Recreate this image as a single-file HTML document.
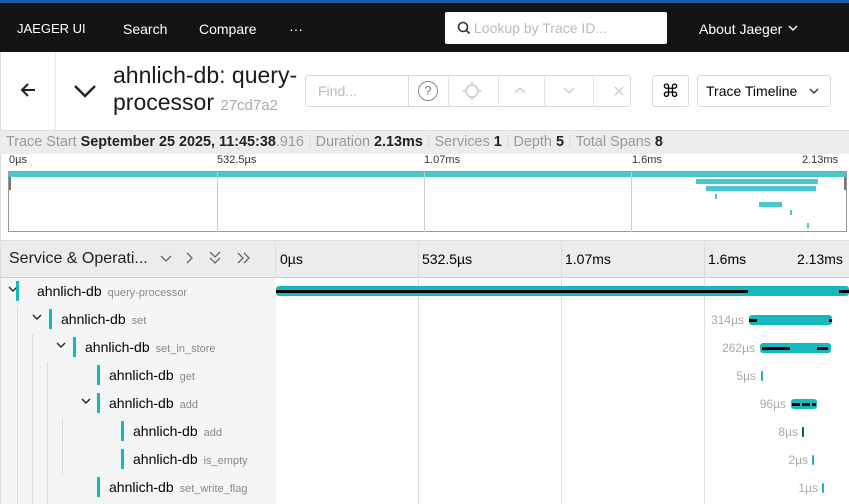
<!DOCTYPE html>
<html><head><meta charset="utf-8"><style>
*{box-sizing:border-box;margin:0;padding:0}
body{width:849px;height:504px;overflow:hidden;font-family:"Liberation Sans",sans-serif;background:#fff;position:relative;color:#000}
.a{position:absolute}
.nav{left:0;top:0;width:849px;height:52px;background:#141414;border-top:3px solid #1d5aa6}
.nav span{position:absolute;top:18px;color:#fff;font-size:14px}
.btn{position:absolute;border:1px solid #d9d9d9;border-radius:3px;background:#fff}
.row{position:absolute;left:0;width:849px;height:28px}
.sv{position:absolute;top:6px;font-size:14px;white-space:nowrap}
.sv small{font-size:11px;color:#888;margin-left:6px}
.bar{position:absolute;width:3px;height:20px;top:4px;background:#17b8be}
.vl{position:absolute;top:277px;width:1px;height:227px;background:#e0e0e0}
.sp{position:absolute;height:10px;background:#17b8be;border-radius:3px}
.lbl{position:absolute;font-size:12px;color:#aaa;text-align:right;top:8px}
.ln{position:absolute;height:3px;background:#000;top:3.5px}
.ch{position:absolute;top:9px}
.p{color:#ddd;margin:0 4px}
</style></head><body>
<div class="a nav">
<span style="left:17px;font-size:13px">JAEGER UI</span>
<span style="left:123px">Search</span>
<span style="left:199px">Compare</span>
<span style="left:289px;top:18px">···</span>
<div class="a" style="left:445px;top:9px;width:222px;height:32px;background:#fff;border-radius:2px">
<svg class="a" style="left:12px;top:9px" width="14" height="14" viewBox="0 0 14 14"><circle cx="6" cy="6" r="4.5" fill="none" stroke="#333" stroke-width="1.6"/><path d="M9 9l3.5 3.5" stroke="#333" stroke-width="1.8"/></svg>
<span style="left:29px;top:8px;color:#bbb;font-size:14px">Lookup by Trace ID...</span></div>
<span style="left:699px">About Jaeger</span>
<svg class="a" style="left:788px;top:22px" width="10" height="7"><path d="M1 1l4 4 4-4" stroke="#fff" fill="none" stroke-width="1.4"/></svg>
</div>
<div class="a" style="left:0;top:52px;width:56px;height:78px;border-right:1px solid #e8e8e8;border-left:1px solid #ddd"></div>
<svg class="a" style="left:19px;top:81px" width="18" height="18"><path d="M16 9H3M9 3L3 9l6 6" stroke="#222" stroke-width="2" fill="none"/></svg>
<svg class="a" style="left:73px;top:84px" width="24" height="14"><path d="M2 2l10 10 10-10" stroke="#222" stroke-width="2.4" fill="none"/></svg>
<div class="a" style="left:113px;top:62px;font-size:23px;line-height:27px;color:#1a1a1a;white-space:nowrap">ahnlich-db: query-<br>processor <span style="font-size:15px;color:#aaa">27cd7a2</span></div>
<div class="btn" style="left:305px;top:75px;width:326px;height:32px"></div>
<span class="a" style="left:318px;top:83px;color:#bbb;font-size:14px">Find...</span>
<div class="a" style="left:408px;top:75px;width:1px;height:32px;background:#d9d9d9"></div>
<div class="a" style="left:418px;top:81px;width:20px;height:20px;border:1.3px solid #888;border-radius:50%;font-size:13px;color:#777;text-align:center;line-height:18px">?</div>
<div class="a" style="left:448px;top:75px;width:1px;height:32px;background:#e5e5e5"></div>
<div class="a" style="left:498px;top:75px;width:1px;height:32px;background:#e5e5e5"></div>
<div class="a" style="left:544px;top:75px;width:1px;height:32px;background:#e5e5e5"></div>
<div class="a" style="left:593px;top:75px;width:1px;height:32px;background:#e5e5e5"></div>
<svg class="a" style="left:462px;top:81px" width="20" height="20"><circle cx="10" cy="10" r="6" fill="none" stroke="#ccc" stroke-width="1.5"/><path d="M10 1v4M10 15v4M1 10h4M15 10h4" stroke="#ccc" stroke-width="1.5"/></svg>
<svg class="a" style="left:514px;top:86px" width="12" height="8"><path d="M1 7l5-5 5 5" stroke="#ccc" fill="none" stroke-width="1.4"/></svg>
<svg class="a" style="left:563px;top:87px" width="12" height="8"><path d="M1 1l5 5 5-5" stroke="#ccc" fill="none" stroke-width="1.4"/></svg>
<svg class="a" style="left:614px;top:86px" width="10" height="10"><path d="M1 1l8 8M9 1l-8 8" stroke="#ccc" stroke-width="1.3"/></svg>
<div class="btn" style="left:652px;top:75px;width:37px;height:32px;text-align:center;font-size:18px;line-height:30px">⌘</div>
<div class="btn" style="left:697px;top:75px;width:134px;height:32px"></div>
<span class="a" style="left:706px;top:83px;font-size:14px">Trace Timeline</span>
<svg class="a" style="left:809px;top:88px" width="10" height="7"><path d="M1 1l4 4 4-4" stroke="#333" fill="none" stroke-width="1.4"/></svg>
<div class="a" style="left:0;top:130px;width:849px;height:24px;background:#ececec;border-top:1px solid #e0e0e0;font-size:14.4px;color:#999;padding:3px 0 0 6px;white-space:nowrap">Trace Start <b style="color:#222">September 25 2025, 11:45:38</b>.916<span class="p">|</span>Duration <b style="color:#222">2.13ms</b><span class="p">|</span>Services <b style="color:#222">1</b><span class="p">|</span>Depth <b style="color:#222">5</b><span class="p">|</span>Total Spans <b style="color:#222">8</b></div>
<div class="a" style="left:0;top:154px;width:849px;height:86px;border-left:1px solid #ddd;font-size:11px;color:#333">
<span class="a" style="left:8px;top:0">0µs</span><span class="a" style="left:216px;top:0">532.5µs</span><span class="a" style="left:423px;top:0">1.07ms</span><span class="a" style="left:631px;top:0">1.6ms</span><span class="a" style="left:801px;top:0">2.13ms</span>
</div>
<div class="a" style="left:8px;top:171px;width:839px;height:61px;border:1px solid #999;background:#fff">
<div class="a" style="left:0;top:0;width:837px;height:5px;background:#4bc6cb"></div>
<div class="a" style="left:208px;top:0;width:1px;height:60px;background:#ccc"></div>
<div class="a" style="left:415px;top:0;width:1px;height:60px;background:#ccc"></div>
<div class="a" style="left:622px;top:0;width:1px;height:60px;background:#ccc"></div>
<div class="a" style="left:0;top:5px;width:2px;height:13px;background:#777"></div>
<div class="a" style="left:835px;top:5px;width:2px;height:13px;background:#777"></div>
<div class="a" style="left:687px;top:7px;width:122px;height:5px;background:#4bc6cb"></div>
<div class="a" style="left:697px;top:14px;width:110px;height:5px;background:#4bc6cb"></div>
<div class="a" style="left:706px;top:22px;width:2px;height:5px;background:#4bc6cb"></div>
<div class="a" style="left:750px;top:30px;width:23px;height:5px;background:#4bc6cb"></div>
<div class="a" style="left:781px;top:38px;width:2px;height:5px;background:#4bc6cb"></div>
<div class="a" style="left:798px;top:51px;width:2px;height:5px;background:#4bc6cb"></div>
</div>
<div class="a" style="left:0;top:240px;width:849px;height:38px;background:#ececec;border-top:1px solid #ddd;border-bottom:1px solid #ccc;border-left:1px solid #ddd"></div>
<span class="a" style="left:9px;top:250px;font-size:16px;color:#222">Service &amp; Operati...</span>
<svg class="a" style="left:160px;top:255px" width="12" height="8"><path d="M1 1l5 5 5-5" stroke="#666" fill="none" stroke-width="1.3"/></svg>
<svg class="a" style="left:186px;top:252px" width="8" height="12"><path d="M1 1l5 5-5 5" stroke="#666" fill="none" stroke-width="1.3"/></svg>
<svg class="a" style="left:209px;top:251px" width="12" height="14"><path d="M1 1l5 5 5-5M1 7l5 5 5-5" stroke="#666" fill="none" stroke-width="1.3"/></svg>
<svg class="a" style="left:237px;top:252px" width="14" height="12"><path d="M1 1l5 5-5 5M7 1l5 5-5 5" stroke="#666" fill="none" stroke-width="1.3"/></svg>
<div class="a" style="left:275px;top:240px;width:1px;height:264px;background:#ddd"></div>
<span class="a" style="left:280px;top:251px;font-size:14px">0µs</span>
<span class="a" style="left:422px;top:251px;font-size:14px">532.5µs</span>
<span class="a" style="left:565px;top:251px;font-size:14px">1.07ms</span>
<span class="a" style="left:708px;top:251px;font-size:14px">1.6ms</span>
<span class="a" style="left:797px;top:251px;font-size:14px">2.13ms</span>
<div class="a" style="left:418px;top:240px;width:1px;height:38px;background:#ddd"></div>
<div class="a" style="left:561px;top:240px;width:1px;height:38px;background:#ddd"></div>
<div class="a" style="left:704px;top:240px;width:1px;height:38px;background:#ddd"></div>
<div class="a" style="left:0;top:278px;width:276px;height:226px;background:#f5f5f5;border-left:1px solid #ddd"></div>
<div class="vl" style="left:418px"></div><div class="vl" style="left:561px"></div><div class="vl" style="left:704px"></div>
<div class="a" style="left:17px;top:306px;width:1px;height:198px;background:#ddd"></div>
<div class="a" style="left:32px;top:334px;width:1px;height:170px;background:#ddd"></div>
<div class="a" style="left:47px;top:362px;width:1px;height:142px;background:#ddd"></div>
<div class="a" style="left:62px;top:418px;width:1px;height:56px;background:#ddd"></div>

<div class="row" style="top:277px"><svg class="ch" style="left:8px" width="10" height="7"><path d="M1 1l4 4 4-4" stroke="#222" fill="none" stroke-width="1.4"/></svg><div class="bar" style="left:16px"></div><span class="sv" style="left:37px">ahnlich-db<small>query-processor</small></span>
<div class="sp" style="left:276px;top:9px;width:573px"><div class="ln" style="left:0;width:472px"></div><div class="ln" style="left:563px;width:10px"></div></div></div>
<div class="row" style="top:305px"><svg class="ch" style="left:32px" width="10" height="7"><path d="M1 1l4 4 4-4" stroke="#222" fill="none" stroke-width="1.4"/></svg><div class="bar" style="left:49px"></div><span class="sv" style="left:61px">ahnlich-db<small>set</small></span>
<span class="lbl" style="left:690px;width:54px">314µs</span><div class="sp" style="left:749px;top:10px;width:83px"><div class="ln" style="left:0;width:8px"></div><div class="ln" style="left:80px;width:3px"></div></div></div>
<div class="row" style="top:333px"><svg class="ch" style="left:56px" width="10" height="7"><path d="M1 1l4 4 4-4" stroke="#222" fill="none" stroke-width="1.4"/></svg><div class="bar" style="left:73px"></div><span class="sv" style="left:85px">ahnlich-db<small>set_in_store</small></span>
<span class="lbl" style="left:700px;width:55px">262µs</span><div class="sp" style="left:760px;top:10px;width:71px"><div class="ln" style="left:2px;width:28px"></div><div class="ln" style="left:57px;width:11px"></div></div></div>
<div class="row" style="top:361px"><div class="bar" style="left:97px"></div><span class="sv" style="left:109px">ahnlich-db<small>get</small></span>
<span class="lbl" style="left:720px;width:36px">5µs</span><div class="sp" style="left:761px;top:10px;width:2px"></div></div>
<div class="row" style="top:389px"><svg class="ch" style="left:81px" width="10" height="7"><path d="M1 1l4 4 4-4" stroke="#222" fill="none" stroke-width="1.4"/></svg><div class="bar" style="left:97px"></div><span class="sv" style="left:109px">ahnlich-db<small>add</small></span>
<span class="lbl" style="left:740px;width:46px">96µs</span><div class="sp" style="left:791px;top:10px;width:26px"><div class="ln" style="left:1px;width:24px;background:repeating-linear-gradient(90deg,#000 0 8px,transparent 8px 10px)"></div></div></div>
<div class="row" style="top:417px"><div class="bar" style="left:121px"></div><span class="sv" style="left:133px">ahnlich-db<small>add</small></span>
<span class="lbl" style="left:760px;width:38px">8µs</span><div class="sp" style="left:802px;top:10px;width:2px;background:#0a5a5e"></div></div>
<div class="row" style="top:445px"><div class="bar" style="left:121px"></div><span class="sv" style="left:133px">ahnlich-db<small>is_empty</small></span>
<span class="lbl" style="left:770px;width:38px">2µs</span><div class="sp" style="left:812px;top:10px;width:2px"></div></div>
<div class="row" style="top:473px"><div class="bar" style="left:97px"></div><span class="sv" style="left:109px">ahnlich-db<small>set_write_flag</small></span>
<span class="lbl" style="left:780px;width:38px">1µs</span><div class="sp" style="left:822px;top:10px;width:2px"></div></div>
</body></html>
